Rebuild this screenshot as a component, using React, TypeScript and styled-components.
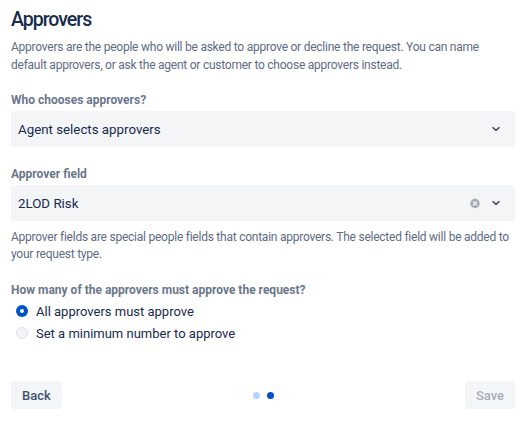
import React from "react";
import styled, { createGlobalStyle } from "styled-components";

const Global = createGlobalStyle`
  html, body { margin: 0; padding: 0; background: #ffffff; }
  body { font-family: Roboto, "Noto Sans", sans-serif; color: #172B4D; -webkit-font-smoothing: antialiased; }
  * { box-sizing: border-box; }
`;

const Page = styled.div`
  width: 522px;
  height: 424px;
  padding: 7px 7px 0 11px;
  display: flex;
  flex-direction: column;
`;

const Title = styled.h1`
  margin: 0;
  font-size: 19.5px;
  font-weight: 500;
  line-height: 26px;
  color: #172B4D;
  letter-spacing: -1px;
`;

const Description = styled.p<{ $mt: number; $lh: number }>`
  margin: ${(p) => p.$mt}px 0 0;
  font-size: 12px;
  line-height: ${(p) => p.$lh}px;
  letter-spacing: -0.24px;
  color: #5E6C84;
`;

const Label = styled.div<{ $mt: number }>`
  margin-top: ${(p) => p.$mt}px;
  font-size: 12px;
  font-weight: 700;
  line-height: 16px;
  color: #6B778C;
`;

const Select = styled.div`
  margin-top: 3px;
  height: 36px;
  background: #F4F5F7;
  border-radius: 3px;
  display: flex;
  align-items: center;
  padding: 0 14px 0 7px;
  gap: 11px;
`;

const SelectValue = styled.span`
  flex: 1;
  font-size: 13.3px;
  color: #172B4D;
`;

const IconBox = styled.span`
  display: inline-flex;
  align-items: center;
  justify-content: center;
  width: 10px;
  height: 10px;
`;

const Chevron = () => (
  <IconBox>
    <svg width="10" height="10" viewBox="0 0 10 10">
      <path d="M2 3.7 L5 6.5 L8 3.7" fill="none" stroke="#42526E" strokeWidth="1.6" strokeLinecap="round" strokeLinejoin="round" />
    </svg>
  </IconBox>
);

const Clear = () => (
  <IconBox>
    <svg width="11" height="11" viewBox="0 0 11 11">
      <circle cx="5.5" cy="5.5" r="5.2" fill="#A5ADBA" />
      <path d="M3.8 3.8 L7.2 7.2 M7.2 3.8 L3.8 7.2" stroke="#F4F5F7" strokeWidth="1.4" strokeLinecap="round" />
    </svg>
  </IconBox>
);

const RadioGroup = styled.div`
  margin-top: 4px;
  display: flex;
  flex-direction: column;
  gap: 4px;
  padding-left: 5px;
`;

const RadioRow = styled.label`
  display: flex;
  align-items: center;
  gap: 8px;
  height: 18px;
  font-size: 13px;
  color: #172B4D;
`;

const RadioDot = styled.span<{ $checked?: boolean }>`
  width: 12px;
  height: 12px;
  border-radius: 50%;
  background: ${(p) => (p.$checked ? "#0052CC" : "#F4F5F7")};
  border: ${(p) => (p.$checked ? "none" : "1.5px solid #DFE1E6")};
  display: inline-flex;
  align-items: center;
  justify-content: center;
  &::after {
    content: "";
    width: 4px;
    height: 4px;
    border-radius: 50%;
    background: #ffffff;
    display: ${(p) => (p.$checked ? "block" : "none")};
  }
`;

const Footer = styled.div`
  margin-top: auto;
  margin-bottom: 15px;
  display: flex;
  align-items: center;
  justify-content: space-between;
`;

const Button = styled.button<{ $disabled?: boolean }>`
  height: 28px;
  width: ${(p) => (p.$disabled ? 50 : 51)}px;
  padding: 0;
  border: none;
  border-radius: 3px;
  background: #F4F5F7;
  font-family: inherit;
  font-size: 13px;
  font-weight: 500;
  color: ${(p) => (p.$disabled ? "#A5ADBA" : "#42526E")};
`;

const Dots = styled.div`
  display: flex;
  gap: 7px;
`;

const Dot = styled.span<{ $active?: boolean }>`
  width: 7px;
  height: 7px;
  border-radius: 50%;
  background: ${(p) => (p.$active ? "#0052CC" : "#B3D4FF")};
`;

export default function App() {
  return (
    <>
      <Global />
      <Page>
        <Title>Approvers</Title>
        <Description $mt={5} $lh={18}>
          Approvers are the people who will be asked to approve or decline the request. You can name
          default approvers, or ask the agent or customer to choose approvers instead.
        </Description>
        <Label $mt={18}>Who chooses approvers?</Label>
        <Select>
          <SelectValue>Agent selects approvers</SelectValue>
          <Chevron />
        </Select>
        <Label $mt={19}>Approver field</Label>
        <Select>
          <SelectValue>2LOD Risk</SelectValue>
          <Clear />
          <Chevron />
        </Select>
        <Description $mt={8} $lh={17}>
          Approver fields are special people fields that contain approvers. The selected field will be added to
          your request type.
        </Description>
        <Label $mt={19}>How many of the approvers must approve the request?</Label>
        <RadioGroup>
          <RadioRow>
            <RadioDot $checked />
            All approvers must approve
          </RadioRow>
          <RadioRow>
            <RadioDot />
            Set a minimum number to approve
          </RadioRow>
        </RadioGroup>
        <Footer>
          <Button>Back</Button>
          <Dots>
            <Dot />
            <Dot $active />
          </Dots>
          <Button $disabled>Save</Button>
        </Footer>
      </Page>
    </>
  );
}
